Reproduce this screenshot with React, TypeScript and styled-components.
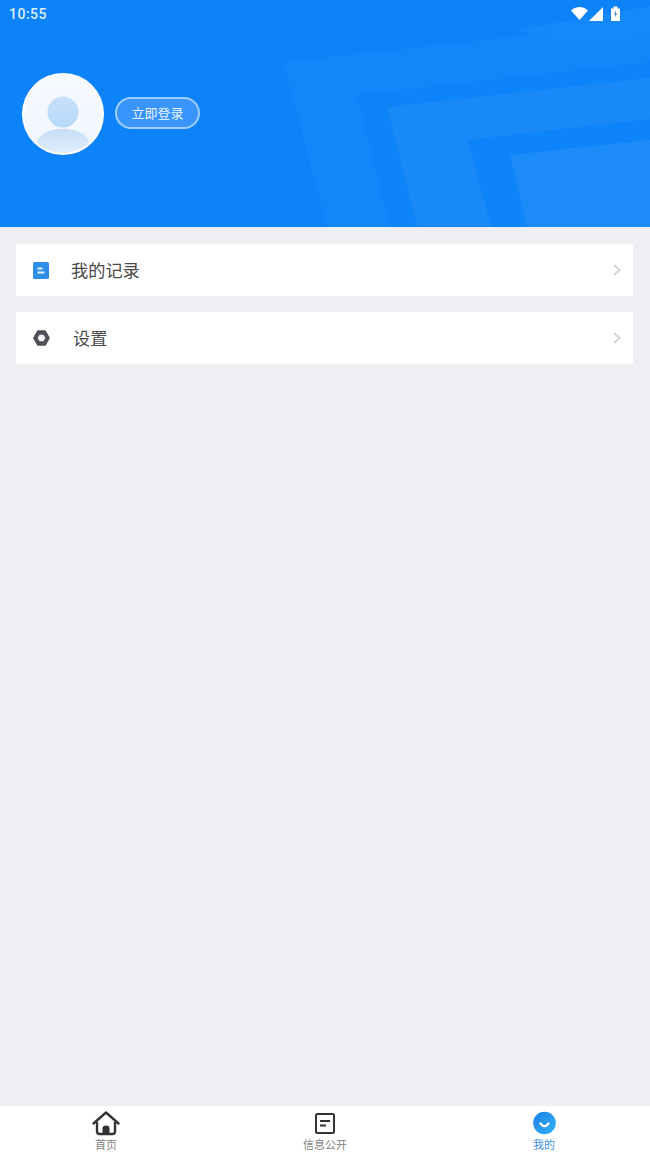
import React from 'react';
import styled, { createGlobalStyle } from 'styled-components';

const GlobalStyle = createGlobalStyle`
  html, body {
    margin: 0;
    padding: 0;
    background: #eeeef3;
  }
  body {
    font-family: Roboto, "Noto Sans CJK SC", "Liberation Sans", sans-serif;
  }
  * {
    box-sizing: border-box;
  }
`;

const Page = styled.div`
  width: 650px;
  height: 1155px;
  display: flex;
  flex-direction: column;
  background: #eeeef3;
  overflow: hidden;
`;

const Header = styled.header`
  position: relative;
  height: 227px;
  flex: none;
  background: #0d83f9;
  overflow: hidden;
`;

const HeaderArt = styled.svg`
  position: absolute;
  top: 0;
  left: 0;
  filter: blur(0.6px);
`;

const StatusBar = styled.div`
  position: relative;
  height: 27px;
  padding: 0 30px 0 9px;
  display: flex;
  align-items: center;
  justify-content: space-between;
  color: #dcedfd;
`;

const Time = styled.span`
  font-size: 14px;
  font-weight: 500;
  letter-spacing: 0.5px;
`;

const StatusIcons = styled.div`
  display: flex;
  align-items: center;
  gap: 1px;
`;

const Profile = styled.div`
  position: relative;
  margin-top: 46px;
  padding-left: 22px;
  display: flex;
  align-items: center;
  gap: 11px;
`;

const Avatar = styled.svg`
  display: block;
  flex: none;
`;

const LoginButton = styled.button`
  width: 85px;
  height: 32px;
  margin-bottom: 2px;
  padding: 0;
  border: 2px solid #9fcffc;
  border-radius: 16px;
  background: #3994fb;
  color: #eaf4ff;
  font-family: "Noto Sans CJK SC", sans-serif;
  font-size: 13px;
  line-height: 26px;
  text-align: center;
`;

const Menu = styled.main`
  flex: 1;
  padding: 17px 17px 0 16px;
  display: flex;
  flex-direction: column;
  gap: 16px;
`;

const Row = styled.div`
  height: 52px;
  padding: 0 11px 0 17px;
  display: flex;
  align-items: center;
  background: #fff;
`;

const RowIcon = styled.div`
  width: 17px;
  height: 17px;
  flex: none;
  display: flex;
  align-items: center;
  justify-content: flex-start;
`;

const RowLabel = styled.span<{ $indent: number }>`
  flex: 1;
  margin-left: ${(p) => p.$indent}px;
  margin-bottom: 2px;
  color: #4a4a4a;
  font-family: "Noto Sans CJK SC", sans-serif;
  font-size: 17.2px;
`;

const TabBar = styled.nav`
  height: 49px;
  flex: none;
  padding-left: 66px;
  display: grid;
  grid-template-columns: repeat(3, 80px);
  column-gap: 139px;
  background: #fff;
`;

const Tab = styled.div<{ $active?: boolean }>`
  padding-top: 5px;
  display: flex;
  flex-direction: column;
  align-items: center;
  color: ${(p) => (p.$active ? '#3a8fdc' : '#808080')};
  font-family: "Noto Sans CJK SC", sans-serif;
  font-size: 11px;
  line-height: 14px;
`;

const TabIcon = styled.svg`
  display: block;
  margin-bottom: 1px;
`;

const Chevron = () => (
  <svg width="10" height="14" viewBox="0 0 10 14" fill="none">
    <path d="M2 2l5.5 5L2 12" stroke="#d6d6d9" strokeWidth="2" />
  </svg>
);

const App: React.FC = () => (
  <Page>
    <GlobalStyle />
    <Header>
      <HeaderArt width="650" height="227" viewBox="0 0 650 227">
        <path d="M283 62L650 22V227H327Z" fill="#1187fa" />
        <path d="M515 30L650 6V38L572 48Z" fill="#1589f9" />
        <path d="M357 95L650 62V227H390Z" fill="#0e84fa" />
        <path d="M387 107L650 78V227H417Z" fill="#1989f8" />
        <path d="M468 140L650 119V227H491Z" fill="#0e84fa" />
        <path d="M510 155L650 140V227H527Z" fill="#1e8cf8" />
      </HeaderArt>
      <StatusBar>
        <Time>10:55</Time>
        <StatusIcons>
          <svg width="17" height="13" viewBox="0 0 17 13">
            <path d="M0 3.400C2.200 1.300 5.300 0 8.500 0s6.300 1.300 8.500 3.400L8.500 13Z" fill="#fff" />
          </svg>
          <svg width="14" height="14" viewBox="0 0 14 14">
            <path d="M14 0V14H0Z" fill="#fff" />
          </svg>
          <svg width="9" height="15" viewBox="0 0 9 15" style={{ marginLeft: 7 }}>
            <path d="M0 2.500H2.500V0.500H6.500V2.500H9V15H0Z" fill="#fff" />
            <path d="M4.800 4.500L3.100 8.300H4.300L4.200 11.500L5.900 7.500H4.700Z" fill="#2a6fb8" />
          </svg>
        </StatusIcons>
      </StatusBar>
      <Profile>
        <Avatar width="82" height="82" viewBox="0 0 82 82">
          <defs>
            <linearGradient id="avatarBg" x1="0" y1="0" x2="0" y2="1">
              <stop offset="0" stopColor="#f7f9ff" />
              <stop offset="1" stopColor="#f1f7fe" />
            </linearGradient>
            <linearGradient id="avatarHead" x1="0" y1="0" x2="0" y2="1">
              <stop offset="0" stopColor="#c9e0f8" />
              <stop offset="1" stopColor="#b4d8fb" />
            </linearGradient>
            <linearGradient id="avatarBody" x1="0" y1="0" x2="0" y2="1">
              <stop offset="0" stopColor="#c6def6" />
              <stop offset="1" stopColor="#e0effd" />
            </linearGradient>
            <clipPath id="avatarClip">
              <circle cx="41" cy="41" r="39" />
            </clipPath>
          </defs>
          <circle cx="41" cy="41" r="41" fill="#fff" />
          <circle cx="41" cy="41" r="39" fill="url(#avatarBg)" />
          <circle cx="41" cy="39" r="15.500" fill="url(#avatarHead)" />
          <path
            d="M15 71C15 62 27 56 41 56s26 6 26 15L60 82H22Z"
            fill="url(#avatarBody)"
            clipPath="url(#avatarClip)"
          />
        </Avatar>
        <LoginButton>立即登录</LoginButton>
      </Profile>
    </Header>
    <Menu>
      <Row>
        <RowIcon>
          <svg width="16" height="17" viewBox="0 0 16 17">
            <rect width="16" height="17" rx="1.500" fill="#2f8fe8" />
            <rect x="4.500" y="5.500" width="5" height="2" fill="#e6f3ff" />
            <rect x="4.500" y="9.500" width="7" height="2" fill="#e6f3ff" />
          </svg>
        </RowIcon>
        <RowLabel $indent={21}>我的记录</RowLabel>
        <Chevron />
      </Row>
      <Row>
        <RowIcon>
          <svg width="17" height="16" viewBox="0 0 17 16" fill="none">
            <path
              d="M5 1H12L16 8L12 15H5L1 8Z"
              fill="#4f5059"
              stroke="#4f5059"
              strokeWidth="1.600"
              strokeLinejoin="round"
            />
            <path d="M6.500 4.800H10.500L12.300 8L10.500 11.200H6.500L4.700 8Z" fill="#f4f4f6" />
          </svg>
        </RowIcon>
        <RowLabel $indent={23}>设置</RowLabel>
        <Chevron />
      </Row>
    </Menu>
    <TabBar>
      <Tab>
        <TabIcon width="28" height="25" viewBox="0 0 28 25" fill="none">
          <path
            d="M1.500 12.500L14 1.500L26.500 12.500"
            stroke="#333"
            strokeWidth="2.400"
            strokeLinecap="round"
            strokeLinejoin="round"
          />
          <path
            d="M5 11V20.500Q5 23 7.500 23H20.500Q23 23 23 20.500V11"
            stroke="#333"
            strokeWidth="2.400"
          />
          <path d="M10.500 23V17.500Q10.500 14.500 14 14.500T17.500 17.500V23Z" fill="#333" />
        </TabIcon>
        首页
      </Tab>
      <Tab>
        <TabIcon width="28" height="25" viewBox="0 0 28 25" fill="none">
          <rect x="5" y="3" width="18" height="19" rx="1.500" stroke="#333" strokeWidth="2" />
          <rect x="9" y="9" width="10" height="2" fill="#333" />
          <rect x="9" y="13.500" width="6" height="2" fill="#333" />
        </TabIcon>
        信息公开
      </Tab>
      <Tab $active>
        <TabIcon width="28" height="25" viewBox="0 0 28 25" fill="none">
          <defs>
            <linearGradient id="mineFill" x1="0" y1="0" x2="1" y2="1">
              <stop offset="0" stopColor="#1a7fe6" />
              <stop offset="1" stopColor="#34b4f8" />
            </linearGradient>
          </defs>
          <circle cx="14.500" cy="12" r="11.300" fill="url(#mineFill)" />
          <path
            d="M10.500 12.500Q14.500 18 18.500 12.500"
            stroke="#fff"
            strokeWidth="2.200"
            strokeLinecap="round"
          />
        </TabIcon>
        我的
      </Tab>
    </TabBar>
  </Page>
);

export default App;
